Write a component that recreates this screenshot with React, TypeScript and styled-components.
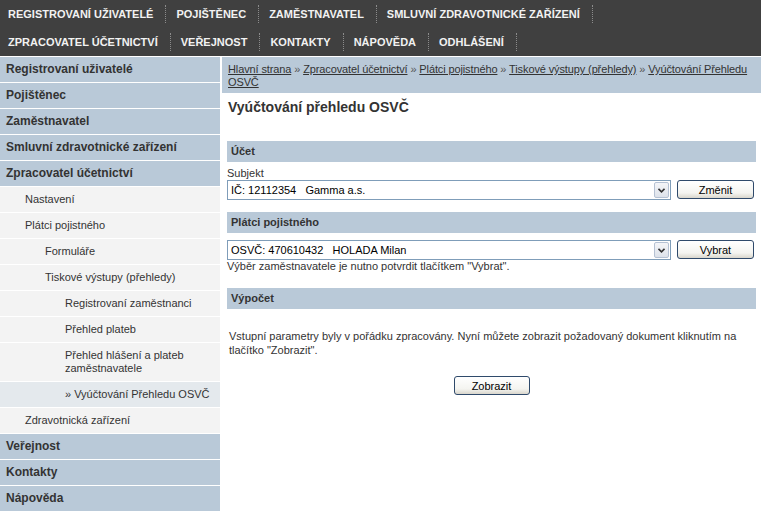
import * as React from 'react'
import styled, { createGlobalStyle } from 'styled-components'

const GlobalStyle = createGlobalStyle`
  html, body {
    margin: 0;
    padding: 0;
    background: #fff;
  }
  body {
    font-family: "Liberation Sans", Arial, sans-serif;
    font-size: 11px;
    color: #333;
  }
`

const TopBar = styled.div`
  background: #404040;
  height: 56px;
`

const NavRow = styled.ul`
  display: flex;
  align-items: center;
  height: 28px;
  margin: 0;
  padding: 0;
  list-style: none;
`

const NavItem = styled.li`
  font: bold 11px "Liberation Sans", Arial, sans-serif;
  color: #f2f2f2;
  text-transform: uppercase;
  line-height: 18px;
  padding: 0 12px 0 10px;
  border-right: 1px dotted #8c8c8c;

  &:first-child {
    padding-left: 8px;
  }
`

const Main = styled.div`
  display: grid;
  grid-template-columns: 220px 1fr;
  column-gap: 2px;
`

const Sidebar = styled.ul`
  margin: 0;
  padding: 0;
  list-style: none;
`

type SideItemProps = {
  $level: number
  $active?: boolean
}
const SideItem = styled.li<SideItemProps>`
  border-top: 1px solid #fff;
  padding: 6px 4px 6px ${p => (p.$level === 0 ? 6 : 5 + p.$level * 20)}px;
  line-height: 13px;
  font-size: ${p => (p.$level === 0 ? 12 : 11)}px;
  font-weight: ${p => (p.$level === 0 ? 'bold' : 'normal')};
  color: #333;
  background: ${p =>
    p.$level === 0 ? '#b9c9d8' : p.$active ? '#e4e9ed' : '#f3f3f3'};
`

const Content = styled.div`
  margin-top: 1px;
`

const Breadcrumb = styled.div`
  background: #b9c9d8;
  padding: 6px 4px 4px 6px;
  line-height: 13px;
  letter-spacing: -0.12px;
  color: #555;
`

const Crumb = styled.a`
  color: #333;
  text-decoration: underline;
`

const Title = styled.h1`
  font: bold 14px "Liberation Sans", Arial, sans-serif;
  line-height: 17px;
  color: #333;
  margin: 6px 0 0 6px;
`

const Body = styled.div`
  padding: 0 5px;
`

const SectionBar = styled.div<{ $top: number }>`
  margin-top: ${p => p.$top}px;
  height: 21px;
  line-height: 21px;
  padding-left: 4px;
  background: #b9c9d8;
  font-weight: bold;
  color: #333;
`

const Label = styled.div<{ $top?: number }>`
  margin-top: ${p => p.$top || 0}px;
  line-height: 13px;
  color: #333;
`

const FieldRow = styled.div<{ $top?: number }>`
  display: flex;
  gap: 6px;
  margin-top: ${p => p.$top || 0}px;
  padding-right: 2px;
`

const SelectBox = styled.div`
  flex: 1;
  height: 20px;
  box-sizing: border-box;
  border: 1px solid #7f9db9;
  background: #fff;
  display: flex;
  align-items: center;
  padding-left: 3px;
  color: #000;
  white-space: pre;
`

const SelectArrow = styled.div`
  margin-left: auto;
  margin-right: 1px;
  width: 15px;
  height: 16px;
  box-sizing: border-box;
  border: 1px solid #b5c1d3;
  border-radius: 2px;
  background: linear-gradient(#f4f5f8, #dde2ea);
  display: flex;
  align-items: center;
  justify-content: center;
`

const Button = styled.button<{ $width: number }>`
  width: ${p => p.$width}px;
  height: 19px;
  padding: 0;
  border: 1px solid #2f4a6b;
  border-radius: 3px;
  background: linear-gradient(#ffffff, #f4f4f0 70%, #d9d6cc);
  font: 11px "Liberation Sans", Arial, sans-serif;
  color: #000;
`

const Paragraph = styled.p`
  margin: 20px 0 0 2px;
  line-height: 14px;
  color: #333;
`

const Center = styled.div`
  display: flex;
  justify-content: center;
  margin-top: 19px;
`

const topRow1 = [
  'Registrovaní uživatelé',
  'Pojištěnec',
  'Zaměstnavatel',
  'Smluvní zdravotnické zařízení',
]
const topRow2 = [
  'Zpracovatel účetnictví',
  'Veřejnost',
  'Kontakty',
  'Nápověda',
  'Odhlášení',
]

const sideItems: { label: string; level: number; active?: boolean }[] = [
  { label: 'Registrovaní uživatelé', level: 0 },
  { label: 'Pojištěnec', level: 0 },
  { label: 'Zaměstnavatel', level: 0 },
  { label: 'Smluvní zdravotnické zařízení', level: 0 },
  { label: 'Zpracovatel účetnictví', level: 0 },
  { label: 'Nastavení', level: 1 },
  { label: 'Plátci pojistného', level: 1 },
  { label: 'Formuláře', level: 2 },
  { label: 'Tiskové výstupy (přehledy)', level: 2 },
  { label: 'Registrovaní zaměstnanci', level: 3 },
  { label: 'Přehled plateb', level: 3 },
  { label: 'Přehled hlášení a plateb zaměstnavatele', level: 3 },
  { label: '» Vyúčtování Přehledu OSVČ', level: 3, active: true },
  { label: 'Zdravotnická zařízení', level: 1 },
  { label: 'Veřejnost', level: 0 },
  { label: 'Kontakty', level: 0 },
  { label: 'Nápověda', level: 0 },
]

const crumbs = [
  'Hlavní strana',
  'Zpracovatel účetnictví',
  'Plátci pojistného',
  'Tiskové výstupy (přehledy)',
  'Vyúčtování Přehledu OSVČ',
]

function Chevron() {
  return (
    <svg width="7" height="5" viewBox="0 0 7 5">
      <path d="M0.5 0.8 L3.5 3.8 L6.5 0.8" fill="none" stroke="#333" strokeWidth="1.6" />
    </svg>
  )
}

function Select({ value }: { value: string }) {
  return (
    <SelectBox>
      {value}
      <SelectArrow>
        <Chevron />
      </SelectArrow>
    </SelectBox>
  )
}

function App(): JSX.Element {
  return (
    <>
      <GlobalStyle />
      <TopBar>
        <NavRow>
          {topRow1.map(item => (
            <NavItem key={item}>{item}</NavItem>
          ))}
        </NavRow>
        <NavRow>
          {topRow2.map(item => (
            <NavItem key={item}>{item}</NavItem>
          ))}
        </NavRow>
      </TopBar>
      <Main>
        <Sidebar>
          {sideItems.map(item => (
            <SideItem key={item.label} $level={item.level} $active={item.active}>
              {item.label}
            </SideItem>
          ))}
        </Sidebar>
        <Content>
          <Breadcrumb>
            {crumbs.map((c, i) => (
              <React.Fragment key={c}>
                {i > 0 ? ' » ' : null}
                <Crumb>{c}</Crumb>
              </React.Fragment>
            ))}
          </Breadcrumb>
          <Title>Vyúčtování přehledu OSVČ</Title>
          <Body>
            <SectionBar $top={25}>Účet</SectionBar>
            <Label $top={5}>Subjekt</Label>
            <FieldRow>
              <Select value="IČ: 12112354   Gamma a.s." />
              <Button $width={77}>Změnit</Button>
            </FieldRow>

            <SectionBar $top={12}>Plátci pojistného</SectionBar>
            <FieldRow $top={7}>
              <Select value="OSVČ: 470610432   HOLADA Milan" />
              <Button $width={77}>Vybrat</Button>
            </FieldRow>
            <Label>Výběr zaměstnavatele je nutno potvrdit tlačítkem "Vybrat".</Label>

            <SectionBar $top={15}>Výpočet</SectionBar>
            <Paragraph>
              Vstupní parametry byly v pořádku zpracovány. Nyní můžete zobrazit
              požadovaný dokument kliknutím na tlačítko "Zobrazit".
            </Paragraph>
            <Center>
              <Button $width={76}>Zobrazit</Button>
            </Center>
          </Body>
        </Content>
      </Main>
    </>
  )
}

export default App
